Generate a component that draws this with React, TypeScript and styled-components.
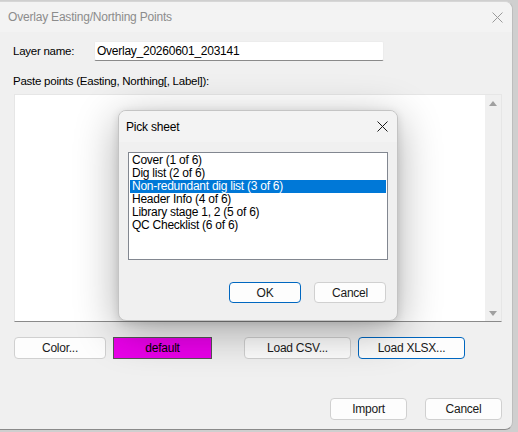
import styled, { createGlobalStyle } from 'styled-components';

const GlobalStyle = createGlobalStyle`
  html, body {
    margin: 0;
    padding: 0;
    background: #cfcfcf;
  }
  body {
    font-family: "Liberation Sans", Arial, sans-serif;
    font-size: 11.5px;
    letter-spacing: -0.25px;
    color: #000;
    overflow: hidden;
  }
`;

const SHEETS = [
  'Cover (1 of 6)',
  'Dig list (2 of 6)',
  'Non-redundant dig list (3 of 6)',
  'Header Info (4 of 6)',
  'Library stage 1, 2 (5 of 6)',
  'QC Checklist (6 of 6)',
];

function CloseIcon({ color }: { color: string }) {
  return (
    <svg width="11" height="11" viewBox="0 0 11 11">
      <path d="M0.5 0.5 L10.5 10.5 M10.5 0.5 L0.5 10.5" stroke={color} strokeWidth="1" fill="none" />
    </svg>
  );
}

function App() {
  const selected = 2;

  return (
    <>
      <GlobalStyle />
      <Window>
        <TitleBar>
          <Title $dim>Overlay Easting/Northing Points</Title>
          <CloseBox>
            <CloseIcon color="#9a9a9a" />
          </CloseBox>
        </TitleBar>
        <Body>
          <FieldRow>
            <FieldLabel>Layer name:</FieldLabel>
            <TextInput>Overlay_20260601_203141</TextInput>
          </FieldRow>
          <PasteLabel>Paste points (Easting, Northing[, Label]):</PasteLabel>
          <TextArea>
            <TextAreaInner />
            <ScrollBar>
              <Arrow $up />
              <Arrow />
            </ScrollBar>
          </TextArea>
          <ButtonRow>
            <Button $width={92}>Color...</Button>
            <Swatch>default</Swatch>
            <Button $width={107} $gapLeft={25}>Load CSV...</Button>
            <Button $width={107} $focused>Load XLSX...</Button>
          </ButtonRow>
          <Footer>
            <Button $width={77}>Import</Button>
            <Button $width={77}>Cancel</Button>
          </Footer>
        </Body>

        <Modal>
          <ModalTitleBar>
            <Title>Pick sheet</Title>
            <ModalClose>
              <CloseIcon color="#1a1a1a" />
            </ModalClose>
          </ModalTitleBar>
          <ModalBody>
            <ListBox>
              {SHEETS.map((s, i) => (
                <ListItem key={s} $selected={i === selected}>
                  {s}
                </ListItem>
              ))}
            </ListBox>
            <ModalFooter>
              <Button $width={72} $height={21} $focused>OK</Button>
              <Button $width={72} $height={21}>Cancel</Button>
            </ModalFooter>
          </ModalBody>
        </Modal>
      </Window>
    </>
  );
}

export default App;

const Window = styled.div`
  position: relative;
  margin-top: 1px;
  width: 513px;
  height: 429px;
  background: #f0f0f0;
  border-right: 1px solid #bdbdbd;
  border-bottom: 1px solid #8a8a8a;
  border-top: 1px solid #d6d6d6;
  border-radius: 0 8px 8px 0;
  box-sizing: border-box;
  display: flex;
  flex-direction: column;
`;

const TitleBar = styled.div`
  height: 30px;
  display: flex;
  align-items: center;
  justify-content: space-between;
  padding: 0 0 0 8px;
  background: #f3f3f3;
  border-radius: 0 8px 0 0;
`;

const Title = styled.div<{ $dim?: boolean }>`
  font-size: 12px;
  letter-spacing: -0.2px;
  color: ${(p) => (p.$dim ? '#8c8c8c' : '#000')};
`;

const CloseBox = styled.div`
  width: 30px;
  display: flex;
  justify-content: center;
`;

const Body = styled.div`
  flex: 1;
  display: flex;
  flex-direction: column;
  padding: 9px 10px 0 13px;
`;

const FieldRow = styled.div`
  display: flex;
  align-items: center;
`;

const FieldLabel = styled.div`
  width: 81px;
`;

const TextInput = styled.div`
  width: 286px;
  height: 18px;
  line-height: 18px;
  padding-left: 2px;
  font-size: 12px;
  background: #fff;
  border: 1px solid #ececec;
  border-bottom: 1px solid #8a8a8a;
  border-radius: 2px;
`;

const PasteLabel = styled.div`
  margin: 13px 0 6px;
  line-height: 14px;
`;

const TextArea = styled.div`
  width: 488px;
  height: 228px;
  margin-left: 1px;
  display: flex;
  background: #fff;
  border: 1px solid #e6e6e6;
  border-bottom: 1px solid #8a8a8a;
  box-sizing: border-box;
`;

const TextAreaInner = styled.div`
  flex: 1;
`;

const ScrollBar = styled.div`
  width: 16px;
  background: #f0f0f0;
  display: flex;
  flex-direction: column;
  justify-content: space-between;
  align-items: center;
  padding: 6px 0 5px;
`;

const Arrow = styled.div<{ $up?: boolean }>`
  width: 0;
  height: 0;
  border-left: 4px solid transparent;
  border-right: 4px solid transparent;
  ${(p) => (p.$up ? 'border-bottom: 5px solid #a0a0a0;' : 'border-top: 5px solid #a0a0a0;')}
`;

const ButtonRow = styled.div`
  display: flex;
  gap: 7px;
  margin: 15px 0 0 1px;
`;

const Button = styled.div<{ $width: number; $height?: number; $focused?: boolean; $gapLeft?: number }>`
  width: ${(p) => p.$width}px;
  height: ${(p) => p.$height ?? 22}px;
  margin-left: ${(p) => p.$gapLeft ?? 0}px;
  box-sizing: border-box;
  display: flex;
  align-items: center;
  justify-content: center;
  font-size: 12px;
  background: #fdfdfd;
  border: 1px solid ${(p) => (p.$focused ? '#0067c0' : '#d0d0d0')};
  border-radius: 4px;
  color: #1a1a1a;
`;

const Swatch = styled.div`
  width: 99px;
  height: 22px;
  box-sizing: border-box;
  display: flex;
  align-items: center;
  justify-content: center;
  font-size: 12px;
  background: #ea00ea;
  border: 1px solid #555;
`;

const Footer = styled.div`
  display: flex;
  justify-content: flex-end;
  gap: 18px;
  margin-top: 39px;
`;

const Modal = styled.div`
  position: absolute;
  left: 118px;
  top: 108px;
  width: 280px;
  height: 211px;
  box-sizing: border-box;
  background: #f0f0f0;
  border: 1px solid #c4c4c4;
  border-radius: 8px;
  box-shadow: 0 10px 44px rgba(0, 0, 0, 0.32), 0 2px 8px rgba(0, 0, 0, 0.12);
  display: flex;
  flex-direction: column;
  overflow: hidden;
`;

const ModalTitleBar = styled.div`
  height: 31px;
  display: flex;
  align-items: center;
  justify-content: space-between;
  padding-left: 7px;
  background: #f3f3f3;
`;

const ModalClose = styled.div`
  width: 30px;
  display: flex;
  justify-content: center;
`;

const ModalBody = styled.div`
  flex: 1;
  padding: 10px 0 0 9px;
  display: flex;
  flex-direction: column;
`;

const ListBox = styled.div`
  width: 260px;
  height: 108px;
  box-sizing: border-box;
  background: #fff;
  border: 1px solid #828790;
  padding: 1px 1px;
  font-size: 12px;
`;

const ListItem = styled.div<{ $selected?: boolean }>`
  height: 13px;
  line-height: 13px;
  padding-left: 2px;
  white-space: nowrap;
  background: ${(p) => (p.$selected ? '#0078d7' : 'transparent')};
  color: ${(p) => (p.$selected ? '#fff' : '#000')};
`;

const ModalFooter = styled.div`
  display: flex;
  gap: 13px;
  margin: 22px 0 0 101px;
`;
